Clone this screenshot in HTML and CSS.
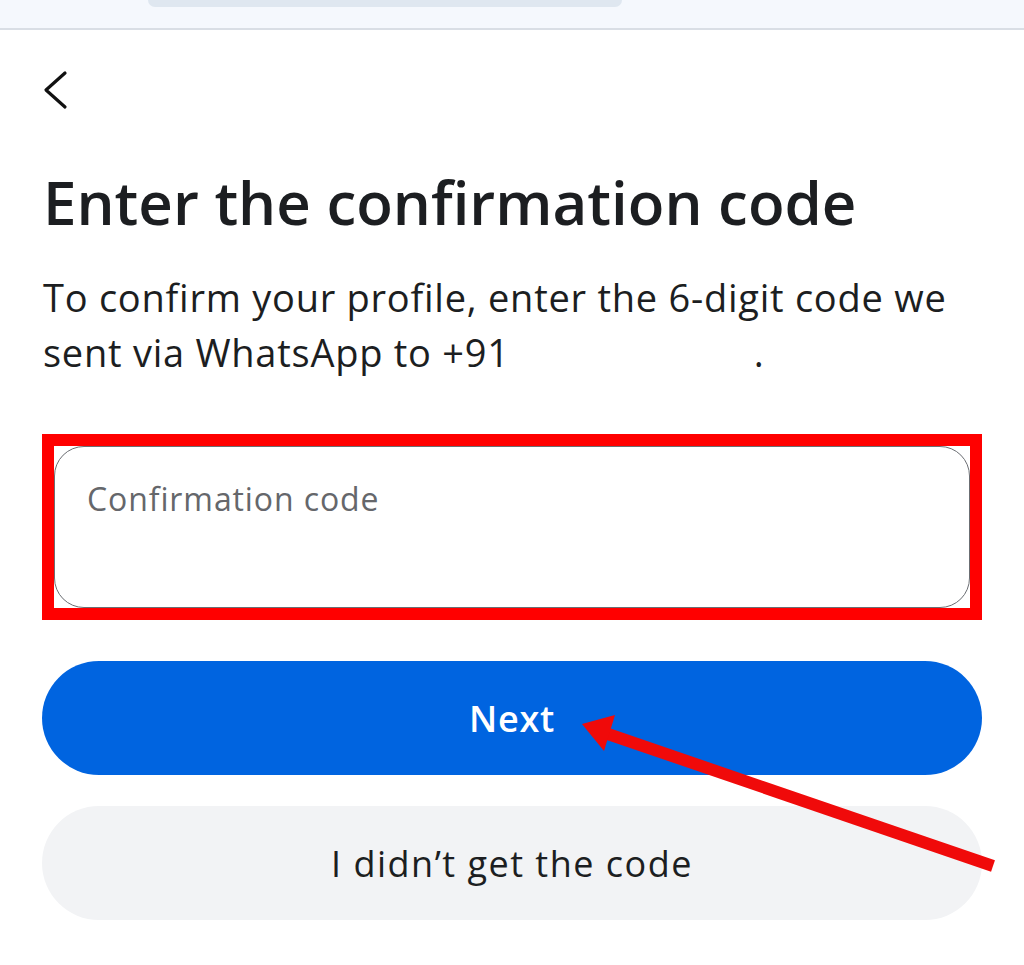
FILE: index.html
```html
<!DOCTYPE html>
<html lang="en">
<head>
    <meta charset="UTF-8">
    <meta name="viewport" content="width=device-width, initial-scale=1.0">
    <title>Enter the confirmation code</title>
    <link rel="stylesheet" href="styles.css">
</head>
<body>
    <div class="topbar">
        <div class="url-pill"></div>
    </div>
    <div class="page">
        <button class="back" aria-label="Back">
            <svg viewBox="0 0 30 40">
                <path d="M25 3 L6 20 L25 37" />
            </svg>
        </button>
        <h1>Enter the confirmation code</h1>
        <p class="intro">To confirm your profile, enter the 6-digit code we<br>sent via WhatsApp to +91<span class="masked"></span>.</p>
        <div class="highlight">
            <input type="text" class="code-input" placeholder="Confirmation code">
        </div>
        <button class="btn btn-primary">Next</button>
        <button class="btn btn-secondary">I didn’t get the code</button>
    </div>
    <svg class="pointer" viewBox="0 0 1024 965">
        <line x1="993" y1="866" x2="605" y2="733" />
        <polygon points="582,724 615,715 604,751" />
    </svg>
</body>
</html>
```

FILE: styles.css
```css
* {
    margin: 0;
    padding: 0;
    box-sizing: border-box;
}
body {
    font-family: "Open Sans", "Noto Sans", sans-serif;
    background: #fff;
    color: #1c1e21;
    width: 1024px;
    height: 965px;
    overflow: hidden;
    position: relative;
}
.topbar {
    height: 30px;
    background: #f5f8fd;
    border-bottom: 2px solid #d9dee5;
    padding-left: 148px;
}
.url-pill {
    width: 474px;
    height: 7px;
    background: #dfe7f0;
    border-radius: 0 0 14px 14px;
}
.page {
    padding: 40px 42px 0 42px;
    display: flex;
    flex-direction: column;
}
.back {
    width: 30px;
    height: 40px;
    border: none;
    background: none;
    margin-left: -2px;
}
.back svg {
    width: 30px;
    height: 40px;
    fill: none;
    stroke: #111;
    stroke-width: 3.2;
    stroke-linecap: round;
    stroke-linejoin: round;
}
h1 {
    margin-top: 56px;
    font-size: 60px;
    font-weight: 600;
    letter-spacing: 0;
    line-height: 72px;
    color: #1c1e21;
    padding-left: 1px;
    white-space: nowrap;
}
.intro {
    margin-top: 32px;
    font-size: 38px;
    letter-spacing: 0.75px;
    line-height: 55px;
    color: #1c1e21;
    padding-left: 1px;
    white-space: nowrap;
}
.masked {
    display: inline-block;
    width: 244px;
}
.highlight {
    margin-top: 54px;
    border: 12px solid #ff0000;
    height: 186px;
    padding: 0;
}
.code-input {
    width: 100%;
    height: 100%;
    border: 1.5px solid #6b6e73;
    border-radius: 30px;
    padding: 0 0 58px 32px;
    font-family: inherit;
    font-size: 32px;
    letter-spacing: 0.9px;
    color: #1c1e21;
    outline: none;
    background: #fff;
}
.code-input::placeholder {
    color: #65676b;
}
.btn {
    width: 940px;
    height: 114px;
    border: none;
    border-radius: 57px;
    font-family: inherit;
    font-size: 36px;
}
.btn-primary {
    margin-top: 41px;
    background: #0064e0;
    color: #fff;
    font-weight: 600;
    letter-spacing: 0.8px;
}
.btn-secondary {
    margin-top: 31px;
    background: #f2f3f5;
    color: #1c1e21;
    font-weight: 500;
    letter-spacing: 1.5px;
}
.pointer {
    position: absolute;
    left: 0;
    top: 0;
    width: 1024px;
    height: 965px;
    pointer-events: none;
}
.pointer line {
    stroke: #f00a0a;
    stroke-width: 12;
}
.pointer polygon {
    fill: #f00a0a;
}
```
